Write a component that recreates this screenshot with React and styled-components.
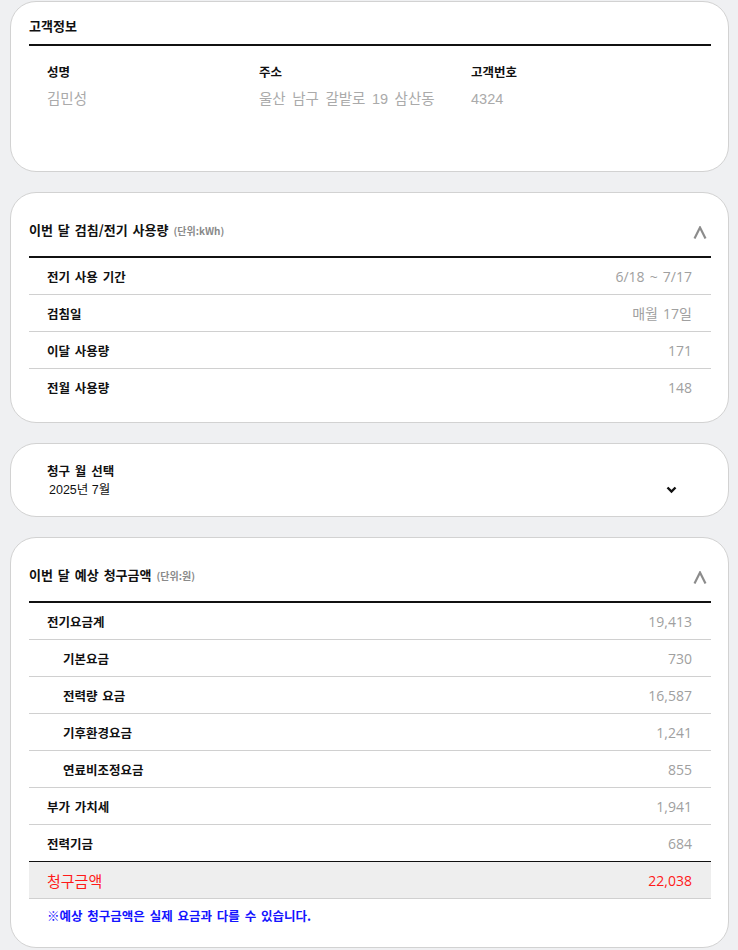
import React from "react";
import styled, { createGlobalStyle } from "styled-components";

const Global = createGlobalStyle`
  html, body { margin: 0; padding: 0; background: #eff0f2; }
  body { font-family: "Noto Sans CJK KR", "Noto Sans", sans-serif; color: #111; }
  * { box-sizing: border-box; }
`;

const Page = styled.div`
  width: 738px;
  padding: 1px 9px 0 10px;
  display: flex;
  flex-direction: column;
  gap: 20px;
`;

const Card = styled.section`
  background: #fff;
  border: 1px solid #d2d2d2;
  border-radius: 26px;
  padding: 0 17px ${(p) => p.$pb || 16}px 18px;
`;

const SimpleHeader = styled.div`
  padding: 14px 0 8px;
  line-height: 20px;
  font-size: 13px;
  font-weight: 700;
  border-bottom: 2px solid #111;
`;

const SectionHeader = styled.div`
  display: flex;
  align-items: center;
  justify-content: space-between;
  height: 65px;
  padding: 27px 4px 16px 0;
  border-bottom: 2px solid #111;
`;

const Title = styled.h2`
  margin: 0;
  height: 20px;
  display: flex;
  align-items: baseline;
  font-size: 13px;
  line-height: 20px;
  font-weight: 700;
  word-spacing: 2px;
`;

const Unit = styled.span`
  font-size: 10px;
  font-weight: 700;
  color: #8a8a8a;
  margin-left: 5px;
  word-spacing: 0;
`;

const Toggle = styled.svg`
  width: 14px;
  height: 13px;
  margin-top: 4px;
`;

const InfoGrid = styled.div`
  display: grid;
  grid-template-columns: 212px 212px 212px;
  padding: 16px 18px 0;
`;

const InfoLabel = styled.div`
  font-size: 12.5px;
  font-weight: 700;
  line-height: 20px;
`;

const InfoValue = styled.div`
  margin-top: 6px;
  font-family: "Liberation Sans", "Noto Sans CJK KR", sans-serif;
  font-size: 14.5px;
  line-height: 22px;
  color: #aaa;
  word-spacing: 2.5px;
`;

const Row = styled.div`
  display: flex;
  align-items: center;
  justify-content: space-between;
  height: 37px;
  padding: 0 19px 0 ${(p) => (p.$indent ? 34 : 18)}px;
  border-bottom: 1px solid ${(p) => (p.$strong ? "#111" : "#d0d0d0")};
  background: ${(p) => (p.$total ? "#eeeeee" : "transparent")};
  &:last-child { border-bottom: ${(p) => (p.$keep ? "1px solid #d0d0d0" : "none")}; }
`;

const RowLabel = styled.span`
  font-size: ${(p) => (p.$total ? 15 : 12.5)}px;
  font-weight: ${(p) => (p.$total ? 400 : 700)};
  color: ${(p) => (p.$total ? "#ff1a1a" : "#111")};
  word-spacing: 2px;
`;

const RowValue = styled.span`
  font-family: "Open Sans", "Noto Sans CJK KR", sans-serif;
  font-size: 14px;
  color: ${(p) => (p.$total ? "#ff1a1a" : "#a0a0a0")};
  word-spacing: 1.5px;
`;

const SelectCard = styled.div`
  padding: 17px 0 0 18px;
`;

const SelectLabel = styled.div`
  font-size: 12.5px;
  font-weight: 700;
  line-height: 19px;
  word-spacing: 2px;
`;

const SelectBox = styled.div`
  display: flex;
  align-items: center;
  justify-content: space-between;
  width: 630px;
  height: 20px;
  padding-left: 2px;
  line-height: 20px;
  font-size: 12.5px;
  font-family: "Liberation Sans", "Noto Sans CJK KR", sans-serif;
`;

const Note = styled.p`
  margin: 0;
  padding: 8px 0 0 18px;
  line-height: 18px;
  font-size: 12.5px;
  font-weight: 700;
  color: #1414ff;
  word-spacing: 2px;
`;

const UpIcon = () => (
  <Toggle viewBox="0 0 14 13">
    <polyline points="1.5,12.5 7,1.5 12.5,12.5" fill="none" stroke="#8c8c8c" strokeWidth="2.2" />
  </Toggle>
);

const DownIcon = () => (
  <svg width="11" height="8" viewBox="0 0 11 8">
    <polyline points="1.5,1.5 5.5,5.5 9.5,1.5" fill="none" stroke="#111" strokeWidth="2.4" />
  </svg>
);

const usage = [
  ["전기 사용 기간", "6/18 ~ 7/17"],
  ["검침일", "매월 17일"],
  ["이달 사용량", "171"],
  ["전월 사용량", "148"],
];

const bills = [
  ["전기요금계", "19,413", false],
  ["기본요금", "730", true],
  ["전력량 요금", "16,587", true],
  ["기후환경요금", "1,241", true],
  ["연료비조정요금", "855", true],
  ["부가 가치세", "1,941", false],
];

export default function App() {
  return (
    <>
      <Global />
      <Page>
        <Card $pb={61}>
          <SimpleHeader>고객정보</SimpleHeader>
          <InfoGrid>
            <div>
              <InfoLabel>성명</InfoLabel>
              <InfoValue>김민성</InfoValue>
            </div>
            <div>
              <InfoLabel>주소</InfoLabel>
              <InfoValue>울산 남구 갈밭로 19 삼산동</InfoValue>
            </div>
            <div>
              <InfoLabel>고객번호</InfoLabel>
              <InfoValue>4324</InfoValue>
            </div>
          </InfoGrid>
        </Card>

        <Card $pb={16}>
          <SectionHeader>
            <Title>
              <span>이번 달 검침/전기 사용량</span>
              <Unit>(단위:kWh)</Unit>
            </Title>
            <UpIcon />
          </SectionHeader>
          {usage.map(([k, v]) => (
            <Row key={k}>
              <RowLabel>{k}</RowLabel>
              <RowValue>{v}</RowValue>
            </Row>
          ))}
        </Card>

        <Card $pb={16}>
          <SelectCard>
            <SelectLabel>청구 월 선택</SelectLabel>
            <SelectBox>
              <span>2025년 7월</span>
              <DownIcon />
            </SelectBox>
          </SelectCard>
        </Card>

        <Card $pb={22}>
          <SectionHeader>
            <Title>
              <span>이번 달 예상 청구금액</span>
              <Unit>(단위:원)</Unit>
            </Title>
            <UpIcon />
          </SectionHeader>
          {bills.map(([k, v, ind]) => (
            <Row key={k} $indent={ind}>
              <RowLabel>{k}</RowLabel>
              <RowValue>{v}</RowValue>
            </Row>
          ))}
          <Row $strong>
            <RowLabel>전력기금</RowLabel>
            <RowValue>684</RowValue>
          </Row>
          <Row $total $keep>
            <RowLabel $total>청구금액</RowLabel>
            <RowValue $total>22,038</RowValue>
          </Row>
          <Note>※예상 청구금액은 실제 요금과 다를 수 있습니다.</Note>
        </Card>
      </Page>
    </>
  );
}
